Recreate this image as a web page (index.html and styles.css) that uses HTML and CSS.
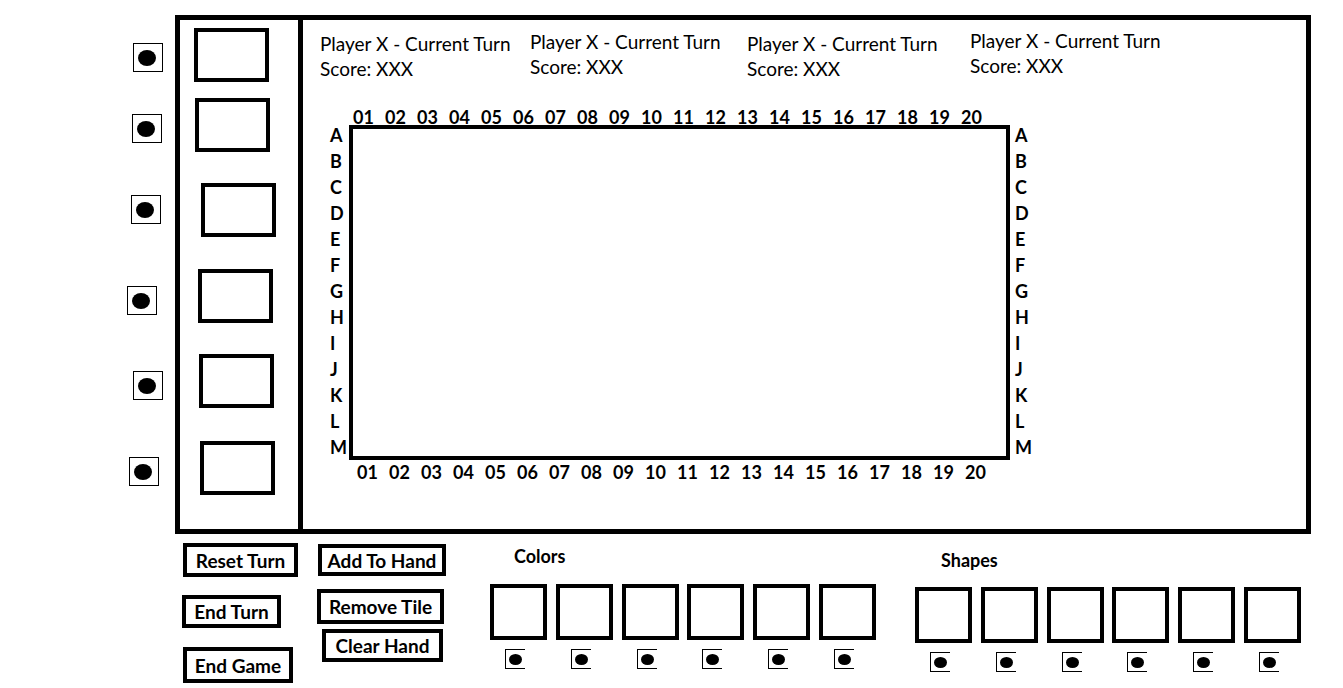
FILE: index.html
```html
<!DOCTYPE html>
<html lang="en">
<head>
  <meta charset="UTF-8">
  <meta name="viewport" content="width=device-width, initial-scale=1.0">
  <title>Tile Game Wireframe</title>
  <link rel="stylesheet" href="styles.css">
</head>
<body>
  <div class="top">
    <div class="side-radios">
      <span class="radio"><span class="dot"></span></span>
      <span class="radio"><span class="dot"></span></span>
      <span class="radio"><span class="dot"></span></span>
      <span class="radio"><span class="dot"></span></span>
      <span class="radio"><span class="dot"></span></span>
      <span class="radio"><span class="dot"></span></span>
    </div>

    <div class="frame">
      <div class="hand">
        <div class="tile"></div>
        <div class="tile"></div>
        <div class="tile"></div>
        <div class="tile"></div>
        <div class="tile"></div>
        <div class="tile"></div>
      </div>

      <div class="main">
        <div class="players">
          <div class="player"><div>Player X - Current Turn</div><div>Score: XXX</div></div>
          <div class="player"><div>Player X - Current Turn</div><div>Score: XXX</div></div>
          <div class="player"><div>Player X - Current Turn</div><div>Score: XXX</div></div>
          <div class="player"><div>Player X - Current Turn</div><div>Score: XXX</div></div>
        </div>

        <div class="board-grid">
          <div class="nums nums-top">
            <span>01</span><span>02</span><span>03</span><span>04</span><span>05</span>
            <span>06</span><span>07</span><span>08</span><span>09</span><span>10</span>
            <span>11</span><span>12</span><span>13</span><span>14</span><span>15</span>
            <span>16</span><span>17</span><span>18</span><span>19</span><span>20</span>
          </div>
          <div class="letters letters-left">
            <div>A</div><div>B</div><div>C</div><div>D</div><div>E</div><div>F</div><div>G</div>
            <div>H</div><div>I</div><div>J</div><div>K</div><div>L</div><div>M</div>
          </div>
          <div class="board"></div>
          <div class="letters letters-right">
            <div>A</div><div>B</div><div>C</div><div>D</div><div>E</div><div>F</div><div>G</div>
            <div>H</div><div>I</div><div>J</div><div>K</div><div>L</div><div>M</div>
          </div>
          <div class="nums nums-bottom">
            <span>01</span><span>02</span><span>03</span><span>04</span><span>05</span>
            <span>06</span><span>07</span><span>08</span><span>09</span><span>10</span>
            <span>11</span><span>12</span><span>13</span><span>14</span><span>15</span>
            <span>16</span><span>17</span><span>18</span><span>19</span><span>20</span>
          </div>
        </div>
      </div>
    </div>
  </div>

  <div class="controls">
    <div class="btn-col btn-col-1">
      <button class="btn">Reset Turn</button>
      <button class="btn">End Turn</button>
      <button class="btn">End Game</button>
    </div>
    <div class="btn-col btn-col-2">
      <button class="btn">Add To Hand</button>
      <button class="btn">Remove Tile</button>
      <button class="btn">Clear Hand</button>
    </div>

    <div class="picker colors">
      <h3>Colors</h3>
      <div class="swatches">
        <div class="swatch"><div class="box"></div><span class="mini"><span class="dot"></span></span></div>
        <div class="swatch"><div class="box"></div><span class="mini"><span class="dot"></span></span></div>
        <div class="swatch"><div class="box"></div><span class="mini"><span class="dot"></span></span></div>
        <div class="swatch"><div class="box"></div><span class="mini"><span class="dot"></span></span></div>
        <div class="swatch"><div class="box"></div><span class="mini"><span class="dot"></span></span></div>
        <div class="swatch"><div class="box"></div><span class="mini"><span class="dot"></span></span></div>
      </div>
    </div>

    <div class="picker shapes">
      <h3>Shapes</h3>
      <div class="swatches">
        <div class="swatch"><div class="box"></div><span class="mini"><span class="dot"></span></span></div>
        <div class="swatch"><div class="box"></div><span class="mini"><span class="dot"></span></span></div>
        <div class="swatch"><div class="box"></div><span class="mini"><span class="dot"></span></span></div>
        <div class="swatch"><div class="box"></div><span class="mini"><span class="dot"></span></span></div>
        <div class="swatch"><div class="box"></div><span class="mini"><span class="dot"></span></span></div>
        <div class="swatch"><div class="box"></div><span class="mini"><span class="dot"></span></span></div>
      </div>
    </div>
  </div>
</body>
</html>
```

FILE: styles.css
```css
/* Global */
body {
  margin: 0;
  background: #ffffff;
  color: #000000;
  font-family: 'Lato', 'Open Sans', sans-serif;
  overflow: hidden;
}

.top {
  display: flex;
  padding-top: 15px;
}

/* Radios left of the hand */
.side-radios {
  width: 175px;
  display: flex;
  flex-direction: column;
  align-items: flex-start;
}

.radio {
  width: 30px;
  height: 29px;
  box-sizing: border-box;
  border: 1px solid #000;
  display: flex;
  align-items: center;
  justify-content: center;
}

.radio .dot {
  width: 18px;
  height: 16px;
  border-radius: 50%;
  background: #000;
  margin-right: 3px;
}

.side-radios .radio:nth-child(1) { margin: 28px 0 0 133px; }
.side-radios .radio:nth-child(2) { margin: 42px 0 0 132px; }
.side-radios .radio:nth-child(3) { margin: 52px 0 0 131px; }
.side-radios .radio:nth-child(4) { margin: 62px 0 0 127px; }
.side-radios .radio:nth-child(5) { margin: 56px 0 0 133px; }
.side-radios .radio:nth-child(6) { margin: 57px 0 0 129px; }

/* Main frame */
.frame {
  width: 1136px;
  height: 519px;
  box-sizing: border-box;
  border: 5px solid #000;
  display: flex;
}

.hand {
  width: 123px;
  box-sizing: border-box;
  border-right: 5px solid #000;
  display: flex;
  flex-direction: column;
  align-items: flex-start;
}

.tile {
  width: 75px;
  height: 54px;
  box-sizing: border-box;
  border: 4px solid #000;
}

.hand .tile:nth-child(1) { margin: 8px 0 0 14px; }
.hand .tile:nth-child(2) { margin: 16px 0 0 15px; }
.hand .tile:nth-child(3) { margin: 31px 0 0 21px; }
.hand .tile:nth-child(4) { margin: 32px 0 0 18px; }
.hand .tile:nth-child(5) { margin: 31px 0 0 19px; }
.hand .tile:nth-child(6) { margin: 33px 0 0 20px; }

.main {
  flex: 1;
}

/* Player scores */
.players {
  display: flex;
  padding: 11px 0 0 17px;
  font-size: 19px;
  line-height: 25px;
}

.player:nth-child(1) { width: 210px; }
.player:nth-child(2) { width: 217px; margin-top: -2px; }
.player:nth-child(3) { width: 223px; }
.player:nth-child(4) { margin-top: -3px; }

/* Board with coordinates */
.board-grid {
  display: grid;
  grid-template-columns: 19px 661px auto;
  margin: 24px 0 0 27px;
  font-weight: 700;
  font-size: 18px;
}

.nums {
  grid-column: 2 / 4;
  display: flex;
  line-height: 24px;
  height: 20px;
  white-space: nowrap;
}

.nums span {
  width: 32px;
  flex: none;
}

.nums-top { padding-left: 4px; }
.nums-bottom { padding-left: 8px; }

.letters div {
  height: 26px;
  line-height: 26px;
}

.letters-left {
  margin-top: -3px;
  grid-column: 1;
}

.letters-right {
  margin-top: -3px;
  padding-left: 5px;
}

.board {
  width: 661px;
  height: 335px;
  box-sizing: border-box;
  border: 4px solid #000;
}

/* Controls under the frame */
.controls {
  display: flex;
  padding-left: 182px;
  align-items: flex-start;
}

.btn-col {
  display: flex;
  flex-direction: column;
  align-items: flex-start;
}

.btn-col-1 { width: 135px; }
.btn-col-2 { width: 173px; }

.btn {
  font-family: 'Lato', 'Open Sans', sans-serif;
  font-weight: 700;
  font-size: 19px;
  color: #000;
  background: #fff;
  border: 4px solid #000;
  box-sizing: border-box;
  padding: 0;
  text-align: center;
  border-radius: 0;
}

.btn-col-1 .btn:nth-child(1) { width: 115px; height: 34px; margin: 9px 0 0 1px; }
.btn-col-1 .btn:nth-child(2) { width: 99px; height: 33px; margin: 18px 0 0 0; }
.btn-col-1 .btn:nth-child(3) { width: 110px; height: 36px; margin: 19px 0 0 1px; }
.btn-col-2 .btn:nth-child(1) { width: 128px; height: 32px; margin: 10px 0 0 1px; }
.btn-col-2 .btn:nth-child(2) { width: 127px; height: 35px; margin: 13px 0 0 0; }
.btn-col-2 .btn:nth-child(3) { width: 121px; height: 33px; margin: 5px 0 0 5px; }

/* Colors / Shapes pickers */
.picker h3 {
  margin: 0;
  font-size: 18px;
  line-height: 20px;
  font-weight: 700;
}

.colors h3 { margin: 12px 0 0 24px; }
.shapes { margin-left: 39px; }
.shapes h3 { margin: 16px 0 0 26px; }

.swatches {
  display: flex;
  gap: 8.8px;
  margin-top: 18px;
}

.shapes .swatches { margin-top: 17px; }

.swatch {
  display: flex;
  flex-direction: column;
  align-items: flex-start;
}

.box {
  width: 57px;
  height: 56px;
  box-sizing: border-box;
  border: 4px solid #000;
}

.mini {
  width: 20px;
  height: 20px;
  box-sizing: border-box;
  border: 1px solid #000;
  border-right: none;
  margin: 9px 0 0 15px;
  display: flex;
  align-items: center;
  padding-left: 3px;
}

.mini .dot {
  width: 13px;
  height: 11px;
  border-radius: 50%;
  background: #000;
}
```
